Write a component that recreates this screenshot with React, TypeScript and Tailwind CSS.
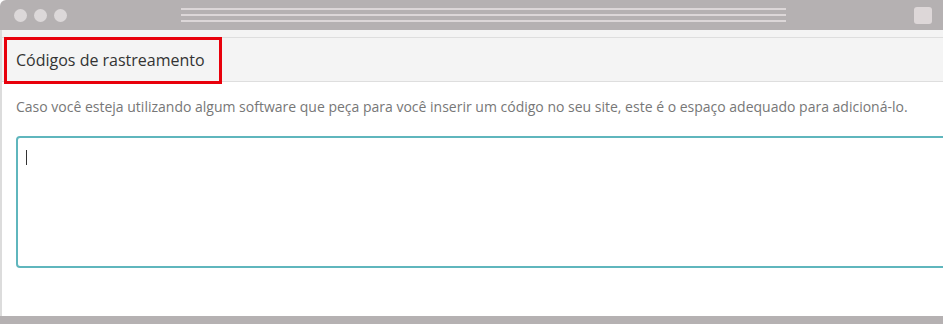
export default function App() {
  return (
    <div className="relative flex h-[324px] w-[943px] flex-col overflow-hidden bg-white font-['Open_Sans',sans-serif]">
      {/* window chrome */}
      <div className="flex h-[30px] shrink-0 items-center rounded-tl-[6px] bg-[#b5b1b2] pl-[14px] pr-[11px]">
        <div className="flex gap-[7px]">
          <span className="h-[13px] w-[13px] rounded-full bg-[#dcd8d9]" />
          <span className="h-[13px] w-[13px] rounded-full bg-[#dcd8d9]" />
          <span className="h-[13px] w-[13px] rounded-full bg-[#dcd8d9]" />
        </div>
        <div className="ml-[114px] flex w-[605px] flex-col gap-[4px]">
          <span className="h-[2px] bg-[#dcd7d8]" />
          <span className="h-[2px] bg-[#dcd7d8]" />
          <span className="h-[2px] bg-[#dcd7d8]" />
        </div>
        <span className="ml-auto h-[17px] w-[18px] rounded-[3px] bg-[#ddd7d8]" />
      </div>

      <div className="flex flex-1 border-l-2 border-[#dcdcdc]">
        <div className="flex flex-1 flex-col">
          <div className="h-[8px] border-b border-[#dedede] bg-[#f4f4f4]" />
          <div className="flex h-[44px] items-center border-b border-[#dedede] bg-[#f4f4f4] pl-[14px]">
            <h2 className="text-[16px] text-[#333]">Códigos de rastreamento</h2>
          </div>
          <p className="mt-[15px] pl-[14px] text-[14px] leading-[20px] text-[#777]">
            Caso você esteja utilizando algum software que peça para você inserir um código no seu site, este é o espaço adequado para adicioná-lo.
          </p>
          <div className="ml-[14px] mr-[-10px] mt-[19px] flex h-[132px] rounded-[4px] border-2 border-[#5fb6bd] pl-[8px] pt-[12px]">
            <span className="h-[15px] w-px bg-[#333]" />
          </div>
        </div>
      </div>

      <div className="h-[8px] shrink-0 bg-[#b5b1b2]" />

      {/* highlight */}
      <div className="absolute left-[4px] top-[37px] h-[47px] w-[218px] border-[3px] border-[#e8000b]" />
    </div>
  );
}
